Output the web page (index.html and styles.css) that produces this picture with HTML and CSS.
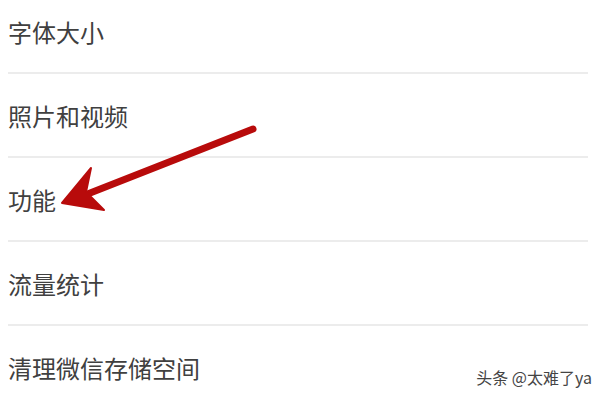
FILE: index.html
```html
<!DOCTYPE html>
<html lang="zh-CN">
<head>
    <meta charset="UTF-8">
    <meta name="viewport" content="width=device-width, initial-scale=1.0">
    <title>设置</title>
    <link rel="stylesheet" href="styles.css">
</head>
<body>

    <div class="settings">
        <div class="item">字体大小</div>
        <div class="item">照片和视频</div>
        <div class="item">功能</div>
        <div class="item">流量统计</div>
        <div class="item last">清理微信存储空间</div>
    </div>

    <!-- red pointer arrow drawn over the list -->
    <svg class="arrow" width="600" height="400" viewBox="0 0 600 400">
        <line x1="253" y1="129" x2="85" y2="195" stroke="#b80b0b" stroke-width="7" stroke-linecap="round"/>
        <path d="M62 203 L91 168 L86 192 L104 210 Z" fill="#b80b0b" stroke="#b80b0b" stroke-width="2" stroke-linejoin="round"/>
    </svg>

    <div class="watermark">头条 @太难了ya</div>

</body>
</html>
```

FILE: styles.css
```css
body {
    font-family: "Noto Sans CJK SC", "Noto Sans", sans-serif;
    background-color: #ffffff;
    color: #333;
    margin: 0;
    width: 600px;
    height: 400px;
    overflow: hidden;
    position: relative;
}

.settings {
    margin-top: -10px;
    padding: 0 12px 0 8px;
}

.item {
    height: 82px;
    display: flex;
    align-items: center;
    font-size: 24px;
    color: #404040;
    border-bottom: 2px solid #ececec;
}

.item.last {
    border-bottom: none;
}

.arrow {
    position: absolute;
    left: 0;
    top: 0;
}

.watermark {
    position: absolute;
    right: 8px;
    bottom: 11px;
    font-size: 16px;
    color: #444;
    text-shadow: 0 0 2px #fff;
}
```
